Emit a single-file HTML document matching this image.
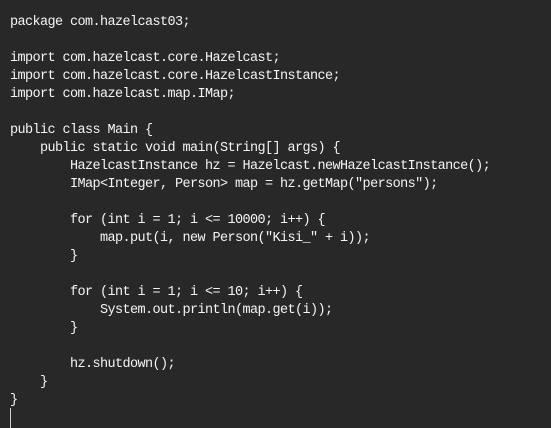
<!DOCTYPE html>
<html><head><style>
html,body{margin:0;padding:0;background:#282828;width:551px;height:428px;overflow:hidden}
pre{margin:0;position:absolute;left:10px;top:13.5px;font-family:"Liberation Mono",monospace;font-size:13.5px;letter-spacing:-0.6px;line-height:18px;color:#f4f4f4}
.cur{position:absolute;left:10px;top:408px;width:1px;height:20px;background:#cfcfcf}
</style></head><body>
<pre>package com.hazelcast03;

import com.hazelcast.core.Hazelcast;
import com.hazelcast.core.HazelcastInstance;
import com.hazelcast.map.IMap;

public class Main {
    public static void main(String[] args) {
        HazelcastInstance hz = Hazelcast.newHazelcastInstance();
        IMap&lt;Integer, Person&gt; map = hz.getMap("persons");

        for (int i = 1; i &lt;= 10000; i++) {
            map.put(i, new Person("Kisi_" + i));
        }

        for (int i = 1; i &lt;= 10; i++) {
            System.out.println(map.get(i));
        }

        hz.shutdown();
    }
}</pre>
<div class="cur"></div>
</body></html>
